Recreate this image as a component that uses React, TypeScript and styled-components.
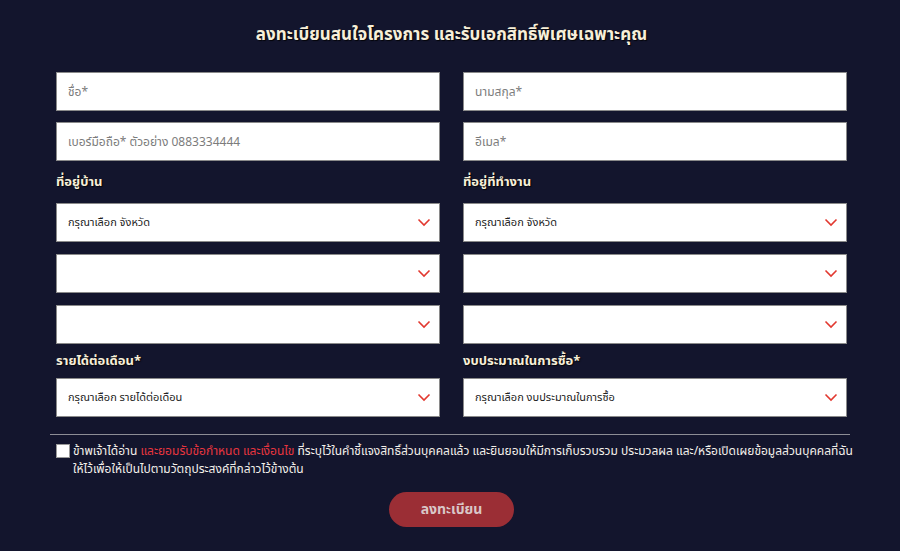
import React from 'react';
import styled, { createGlobalStyle } from 'styled-components';

const GlobalStyle = createGlobalStyle`
    html, body {
        margin: 0;
        padding: 0;
        background: #13152d;
    }
    * {
        box-sizing: border-box;
    }
`;

const Page = styled.div`
    width: 900px;
    height: 551px;
    background: #13152d;
    font-family: 'Noto Sans Thai', 'Noto Sans', 'Liberation Sans', sans-serif;
    padding: 22px 53px 0 56px;
`;

const Title = styled.h2`
    margin: 0 0 24px;
    text-align: center;
    font-size: 17px;
    line-height: 26px;
    font-weight: 700;
    color: #f7efd9;
    text-shadow: 1px 1px 1px rgba(0, 0, 0, 0.8);
`;

const Grid = styled.div`
    display: grid;
    grid-template-columns: 384px 384px;
    column-gap: 23px;
`;

const Column = styled.div`
    display: flex;
    flex-direction: column;
    gap: 12px;
`;

const Input = styled.input`
    width: 384px;
    height: 39px;
    border: 1px solid #8a8a8a;
    background: #fff;
    padding: 0 11px;
    font-family: inherit;
    font-size: 12px;
    color: #333;
    outline: none;

    & + & {
        margin-top: -1px;
    }

    &::placeholder {
        color: #7c7c7c;
    }
`;

const Label = styled.div<{ $tight?: boolean }>`
    font-size: 13px;
    font-weight: 700;
    color: #f7efd9;
    line-height: 18px;
    margin: ${props => (props.$tight ? '-4px 0' : '0')};
    text-shadow: 1px 1px 1px rgba(0, 0, 0, 0.8);
`;

const SelectBox = styled.div`
    width: 384px;
    height: 39px;
    border: 1px solid #8a8a8a;
    background: #fff;
    display: flex;
    align-items: center;
    justify-content: space-between;
    padding: 0 8px 0 11px;
    font-size: 11px;
    color: #222;
`;

const Divider = styled.hr`
    margin: 17px -3px 0 -6px;
    border: 0;
    border-top: 1px solid #8d8d95;
`;

const Consent = styled.label`
    display: flex;
    gap: 3px;
    margin-top: 7px;
    color: #f3f0ea;
    font-size: 12px;
    line-height: 18px;
    white-space: nowrap;
`;

const Box = styled.span`
    flex: none;
    width: 14px;
    height: 14px;
    margin-top: 2px;
    background: #fff;
    border: 1px solid #999;
`;

const Highlight = styled.span`
    color: #e8353f;
`;

const SubmitRow = styled.div`
    display: flex;
    justify-content: center;
    margin-top: 14px;
`;

const Submit = styled.button`
    width: 125px;
    height: 35px;
    border: 0;
    border-radius: 18px;
    background: #9b2e35;
    color: #d9c7c8;
    font-family: inherit;
    font-size: 14px;
    font-weight: 700;
`;

const Chevron = () => (
    <svg width="14" height="9" viewBox="0 0 14 9" fill="none">
        <path d="M1.5 1.5 L7 7 L12.5 1.5" stroke="#e2382f" strokeWidth="1.6" />
    </svg>
);

const Select = ({ text }: { text?: string }) => (
    <SelectBox>
        <span>{text}</span>
        <Chevron />
    </SelectBox>
);

const App = () => {
    return (
        <Page>
            <GlobalStyle />
            <Title>ลงทะเบียนสนใจโครงการ และรับเอกสิทธิ์พิเศษเฉพาะคุณ</Title>
            <Grid>
                <Column>
                    <Input placeholder="ชื่อ*" />
                    <Input placeholder="เบอร์มือถือ* ตัวอย่าง 0883334444" />
                    <Label>ที่อยู่บ้าน</Label>
                    <Select text="กรุณาเลือก จังหวัด" />
                    <Select />
                    <Select />
                    <Label $tight>รายได้ต่อเดือน*</Label>
                    <Select text="กรุณาเลือก รายได้ต่อเดือน" />
                </Column>
                <Column>
                    <Input placeholder="นามสกุล*" />
                    <Input placeholder="อีเมล*" />
                    <Label>ที่อยู่ที่ทำงาน</Label>
                    <Select text="กรุณาเลือก จังหวัด" />
                    <Select />
                    <Select />
                    <Label $tight>งบประมาณในการซื้อ*</Label>
                    <Select text="กรุณาเลือก งบประมาณในการซื้อ" />
                </Column>
            </Grid>
            <Divider />
            <Consent>
                <Box />
                <span>
                    ข้าพเจ้าได้อ่าน <Highlight>และยอมรับข้อกำหนด และเงื่อนไข</Highlight> ที่ระบุไว้ในคำชี้แจงสิทธิ์ส่วนบุคคลแล้ว
                    และยินยอมให้มีการเก็บรวบรวม ประมวลผล และ/หรือเปิดเผยข้อมูลส่วนบุคคลที่ฉัน
                    <br />
                    ให้ไว้เพื่อให้เป็นไปตามวัตถุประสงค์ที่กล่าวไว้ข้างต้น
                </span>
            </Consent>
            <SubmitRow>
                <Submit>ลงทะเบียน</Submit>
            </SubmitRow>
        </Page>
    );
};

export default App;
